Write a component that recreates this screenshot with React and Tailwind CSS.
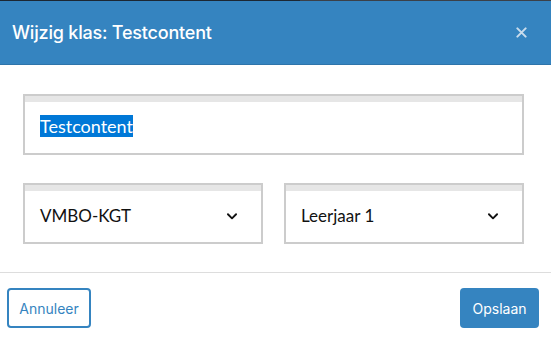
import React from "react";

function Chevron() {
  return (
    <svg width="14" height="14" viewBox="0 0 24 24" fill="none" stroke="#111" strokeWidth="3.2" strokeLinecap="round" strokeLinejoin="round">
      <path d="M5 9l7 7 7-7" />
    </svg>
  );
}

function Select({ label }) {
  return (
    <div className="flex-1 h-[61px] border-2 border-[#cccccc] bg-white shadow-[inset_0_6px_0_#e6e6e6] flex items-center justify-between pl-[15px] pr-[22px] pt-[4px]">
      <span className="text-[17px] text-[#111]" style={{ fontFamily: "Lato, 'Liberation Sans', sans-serif" }}>{label}</span>
      <Chevron />
    </div>
  );
}

export default function App() {
  return (
    <div className="w-[551px] h-[338px] bg-white flex flex-col overflow-hidden" style={{ fontFamily: "Inter, 'Liberation Sans', sans-serif" }}>
      <div className="h-[1px] flex">
        <div className="w-[300px] bg-[#1c2733]"></div>
        <div className="flex-1 bg-[#3b4048]"></div>
      </div>
      <div className="h-[64px] bg-[#3584c0] border-b border-[#2e74aa] flex items-center justify-between pl-[12px] pr-[24px]">
        <span className="text-white text-[18px] font-medium tracking-[-0.2px]">Wijzig klas: Testcontent</span>
        <svg width="11" height="11" viewBox="0 0 12 12" stroke="#c9dcec" strokeWidth="2.2" strokeLinecap="round">
          <path d="M1.5 1.5l9 9M10.5 1.5l-9 9" />
        </svg>
      </div>
      <div className="flex flex-col gap-[28px] pl-[23px] pr-[27px] pt-[29px] pb-[28px] border-b border-[#dddddd]">
        <div className="h-[61px] border-2 border-[#cccccc] bg-white shadow-[inset_0_6px_0_#e6e6e6] flex items-center pl-[15px] pt-[2px]">
          <span className="bg-[#0078d7] text-white text-[18px] leading-[22px]" style={{ fontFamily: "Lato, 'Liberation Sans', sans-serif" }}>Testcontent</span>
        </div>
        <div className="flex gap-[21px]">
          <Select label="VMBO-KGT" />
          <Select label="Leerjaar 1" />
        </div>
      </div>
      <div className="flex justify-between items-center px-[7px] pr-[12px] pt-[15px]">
        <button className="h-[40px] w-[84px] border-2 border-[#3584c0] rounded-[4px] text-[#3584c0] text-[14px] bg-white">Annuleer</button>
        <button className="h-[40px] w-[79px] rounded-[4px] bg-[#3584c0] text-white text-[14px]">Opslaan</button>
      </div>
    </div>
  );
}
